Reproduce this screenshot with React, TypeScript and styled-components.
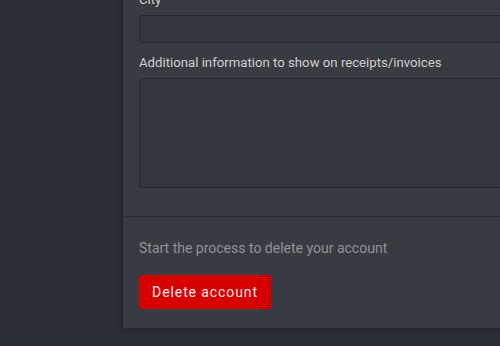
import React from "react";
import styled, { createGlobalStyle } from "styled-components";

const Global = createGlobalStyle`
  html, body { margin: 0; padding: 0; background: #2b2e35; }
  body { font-family: Roboto, "Liberation Sans", Arial, sans-serif; }
  * { box-sizing: border-box; }
`;

const Page = styled.div`
  width: 500px;
  height: 346px;
  overflow: hidden;
  background: #2b2e35;
  padding-left: 123px;
`;

const Panel = styled.div`
  width: 420px;
  margin-top: -10px;
  background: #383b42;
  box-shadow: -2px 1px 4px rgba(0, 0, 0, 0.25);
`;

const Section = styled.div<{ $top?: number; $bottom?: number }>`
  padding: ${(p) => p.$top ?? 0}px 0 ${(p) => p.$bottom ?? 0}px 16px;
  & + & { border-top: 1px solid #2a2c32; }
`;

const Field = styled.div`
  display: flex;
  flex-direction: column;
  margin-bottom: 10px;
  &:last-child { margin-bottom: 0; }
`;

const Label = styled.label`
  font-size: 13.2px;
  line-height: 20px;
  color: #cdcfd2;
  margin-bottom: 5px;
`;

const Input = styled.div<{ $h: number }>`
  height: ${(p) => p.$h}px;
  background: #33363c;
  border: 1px solid #26282d;
  border-radius: 3px;
`;

const Hint = styled.p`
  margin: 0 0 17px;
  font-size: 14px;
  line-height: 20px;
  color: #8f9297;
`;

const DangerButton = styled.button`
  width: 132px;
  height: 34px;
  border: none;
  border-radius: 2px;
  background: #d70000;
  color: #fbeaea;
  font-family: Roboto, "Liberation Sans", Arial, sans-serif;
  font-size: 14px;
  letter-spacing: 0.9px;
  padding: 0;
`;

export default function App() {
  return (
    <>
      <Global />
      <Page>
        <Panel>
          <Section $bottom={28}>
            <Field>
              <Label>City</Label>
              <Input $h={28} />
            </Field>
            <Field>
              <Label>Additional information to show on receipts/invoices</Label>
              <Input $h={110} />
            </Field>
          </Section>
          <Section $top={21} $bottom={19}>
            <Hint>Start the process to delete your account</Hint>
            <DangerButton>Delete account</DangerButton>
          </Section>
        </Panel>
      </Page>
    </>
  );
}
